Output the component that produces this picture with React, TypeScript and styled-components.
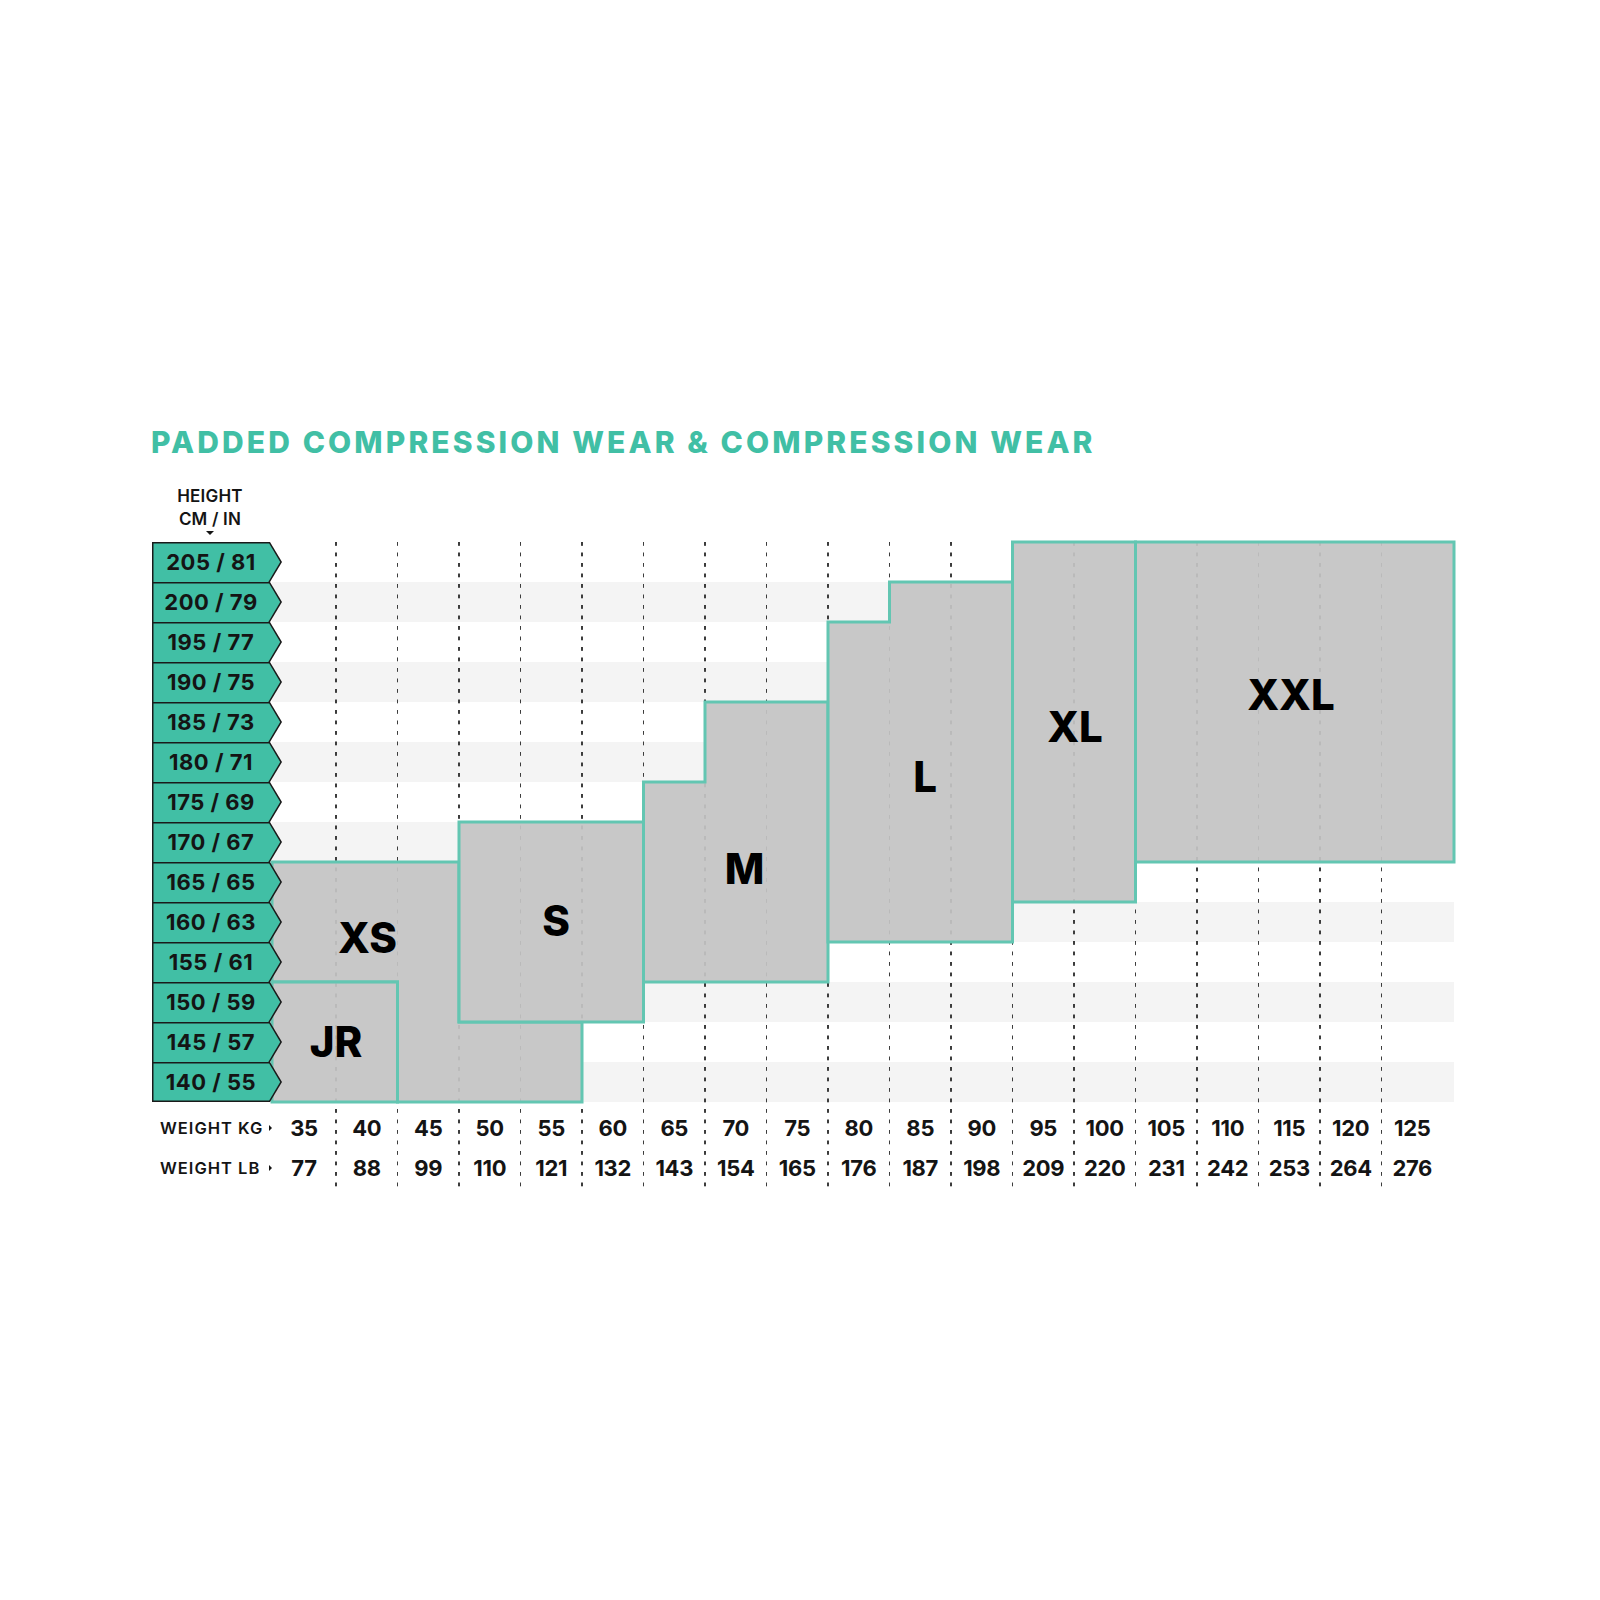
import React from 'react';
import styled, { createGlobalStyle } from 'styled-components';

const TEAL = '#41bfa5';
const EDGE = '#63c6b2';
const INK = '#141414';

const heights: [number, number][] = [
    [205, 81],
    [200, 79],
    [195, 77],
    [190, 75],
    [185, 73],
    [180, 71],
    [175, 69],
    [170, 67],
    [165, 65],
    [160, 63],
    [155, 61],
    [150, 59],
    [145, 57],
    [140, 55],
];

const weightsKg = [35, 40, 45, 50, 55, 60, 65, 70, 75, 80, 85, 90, 95, 100, 105, 110, 115, 120, 125];
const weightsLb = [77, 88, 99, 110, 121, 132, 143, 154, 165, 176, 187, 198, 209, 220, 231, 242, 253, 264, 276];

// plot geometry: x by column edge index, y by row index
const ROW_H = 40;
const PLOT_W = 1182;
const PLOT_H = ROW_H * heights.length;
const edgeX = (k: number) => (k === 0 ? 0 : k >= 19 ? PLOT_W : 64 + (k - 1) * 61.5);

interface SizeZone {
    name: string;
    corners: [number, number][];
    cx: number;
    cy: number;
}

const zones: SizeZone[] = [
    { name: 'XS', corners: [[0, 8], [3, 8], [3, 12], [5, 12], [5, 14], [2, 14], [2, 11], [0, 11]], cx: 95.5, cy: 395 },
    { name: 'JR', corners: [[0, 11], [2, 11], [2, 14], [0, 14]], cx: 64, cy: 499 },
    { name: 'S', corners: [[3, 7], [6, 7], [6, 12], [3, 12]], cx: 284, cy: 378.5 },
    { name: 'M', corners: [[7, 4], [9, 4], [9, 11], [6, 11], [6, 6], [7, 6]], cx: 472.5, cy: 326 },
    { name: 'L', corners: [[10, 1], [12, 1], [12, 10], [9, 10], [9, 2], [10, 2]], cx: 653, cy: 234 },
    { name: 'XL', corners: [[12, 0], [14, 0], [14, 9], [12, 9]], cx: 803, cy: 184 },
    { name: 'XXL', corners: [[14, 0], [19, 0], [19, 8], [14, 8]], cx: 1019, cy: 152 },
];

const toPoints = (corners: [number, number][]) =>
    corners.map(([k, r]) => `${edgeX(k)},${r * ROW_H}`).join(' ');

const GlobalStyle = createGlobalStyle`
    html, body {
        margin: 0;
        background: #ffffff;
    }
    body {
        font-family: Inter, "Liberation Sans", sans-serif;
        color: ${INK};
    }
`;

const App = () => {
    return (
        <>
            <GlobalStyle />
            <DivPage>
                <H1Title>PADDED COMPRESSION WEAR &amp; COMPRESSION WEAR</H1Title>

                <DivChart>
                    <DivHeightHead>
                        <span>HEIGHT</span>
                        <span>CM / IN</span>
                        <SpanDownCaret />
                    </DivHeightHead>

                    {heights.map((_, i) =>
                        i % 2 === 1 ? <DivStripe key={`s${i}`} $row={i + 2} /> : null
                    )}

                    {weightsKg.slice(1).map((_, i) => (
                        <DivDashLine key={`d${i}`} $col={i + 3} />
                    ))}

                    <SvgZones viewBox={`0 0 ${PLOT_W} ${PLOT_H}`} preserveAspectRatio="none">
                        {zones.map((z) => (
                            <polygon key={z.name} points={toPoints(z.corners)} />
                        ))}
                        {zones.map((z) => (
                            <text key={`t${z.name}`} x={z.cx} y={z.cy + 15.5} textAnchor="middle">
                                {z.name}
                            </text>
                        ))}
                    </SvgZones>

                    {heights.map(([cm, inch], i) => (
                        <DivTag key={cm} $row={i + 2}>
                            <DivTagFill $last={i === heights.length - 1}>
                                {cm} / {inch}
                            </DivTagFill>
                        </DivTag>
                    ))}

                    <DivAxisName $row={17}>
                        WEIGHT KG
                        <SpanRightCaret />
                    </DivAxisName>
                    <DivAxisName $row={18}>
                        WEIGHT LB
                        <SpanRightCaret />
                    </DivAxisName>

                    {weightsKg.map((w, i) => (
                        <DivWeight key={`kg${w}`} $row={17} $col={i + 2}>
                            {w}
                        </DivWeight>
                    ))}
                    {weightsLb.map((w, i) => (
                        <DivWeight key={`lb${w}`} $row={18} $col={i + 2}>
                            {w}
                        </DivWeight>
                    ))}
                </DivChart>
            </DivPage>
        </>
    );
};

const DivPage = styled.div`
    min-height: 1600px;
    box-sizing: border-box;
    padding: 424px 0 0 152px;
`;

const H1Title = styled.h1`
    margin: 0 0 0 -1px;
    font-family: Inter, "Liberation Sans", sans-serif;
    font-size: 30px;
    line-height: 36px;
    font-weight: 800;
    letter-spacing: 3.1px;
    color: ${TEAL};
    white-space: nowrap;
`;

const DivChart = styled.div`
    display: grid;
    grid-template-columns: 120px 64px repeat(18, 61.5px) 11px;
    grid-template-rows: 82px repeat(14, ${ROW_H}px) 6px ${ROW_H}px ${ROW_H}px;
`;

const DivHeightHead = styled.div`
    grid-column: 1;
    grid-row: 1;
    align-self: end;
    width: 116px;
    padding-bottom: 7px;
    display: flex;
    flex-direction: column;
    align-items: center;
    font-size: 17px;
    line-height: 22.5px;
    font-weight: 600;
    letter-spacing: 0.2px;
`;

const SpanDownCaret = styled.span`
    margin-top: 1px;
    width: 0;
    height: 0;
    border-left: 4px solid transparent;
    border-right: 4px solid transparent;
    border-top: 4px solid ${INK};
`;

const DivStripe = styled.div<{ $row: number }>`
    grid-column: 2 / -1;
    grid-row: ${(p) => p.$row};
    background: #f4f4f4;
`;

const DivDashLine = styled.div<{ $col: number }>`
    grid-column: ${(p) => p.$col};
    grid-row: 2 / 19;
    justify-self: start;
    width: 1.5px;
    margin-left: -0.75px;
    background-image: linear-gradient(to bottom, #3c3c3c 0 4px, transparent 4px 10.5px);
    background-size: 1.5px 10.5px;
`;

const SvgZones = styled.svg`
    grid-column: 2 / -1;
    grid-row: 2 / 16;
    width: 100%;
    height: 100%;
    display: block;
    overflow: visible;

    polygon {
        fill: #c4c4c4;
        fill-opacity: 0.93;
        stroke: ${EDGE};
        stroke-width: 3;
    }

    text {
        font-family: Inter, "Liberation Sans", sans-serif;
        font-size: 42px;
        font-weight: 800;
        fill: #000000;
    }
`;

const DivTag = styled.div<{ $row: number }>`
    grid-column: 1;
    grid-row: ${(p) => p.$row};
    z-index: 2;
    width: 130px;
    height: ${ROW_H}px;
    background: #1a1a1a;
    clip-path: polygon(0 0, 118px 0, 130px 20px, 118px 40px, 0 40px);
`;

const DivTagFill = styled.div<{ $last: boolean }>`
    height: 100%;
    box-sizing: border-box;
    padding: 0 12px 0 0;
    display: flex;
    align-items: center;
    justify-content: center;
    background: ${TEAL};
    clip-path: ${(p) =>
        p.$last
            ? 'polygon(1.5px 1.5px, 117.2px 1.5px, 128.2px 20px, 117.2px 38.5px, 1.5px 38.5px)'
            : 'polygon(1.5px 1.5px, 117.2px 1.5px, 128.2px 20px, 116.3px 40px, 1.5px 40px)'};
    font-size: 22px;
    font-weight: 700;
    letter-spacing: 0.5px;
    color: ${INK};
    white-space: nowrap;
`;

const DivAxisName = styled.div<{ $row: number }>`
    grid-column: 1;
    grid-row: ${(p) => p.$row};
    display: flex;
    align-items: center;
    justify-content: space-between;
    padding: 0 0 0 8px;
    font-size: 16.5px;
    font-weight: 600;
    letter-spacing: 1px;
    white-space: nowrap;
`;

const SpanRightCaret = styled.span`
    width: 0;
    height: 0;
    border-top: 3.5px solid transparent;
    border-bottom: 3.5px solid transparent;
    border-left: 3px solid ${INK};
`;

const DivWeight = styled.div<{ $row: number; $col: number }>`
    grid-column: ${(p) => p.$col};
    grid-row: ${(p) => p.$row};
    display: flex;
    align-items: center;
    justify-content: center;
    font-size: 22px;
    font-weight: 700;
    letter-spacing: -0.3px;
`;

export default App;
